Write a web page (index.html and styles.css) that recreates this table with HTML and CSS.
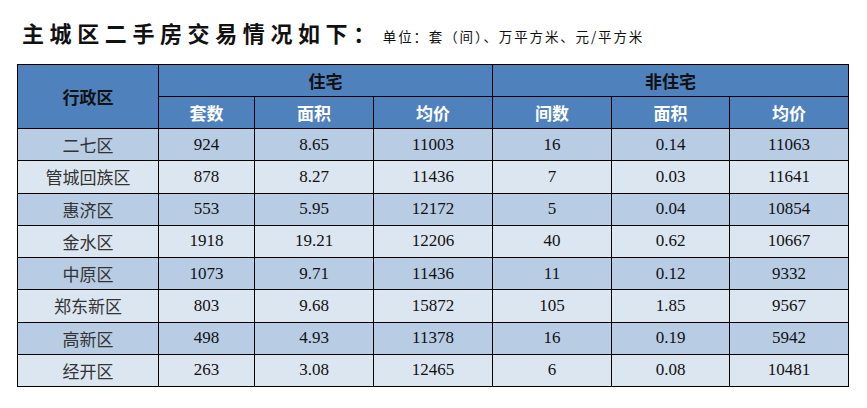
FILE: index.html
```html
<!DOCTYPE html>
<html lang="zh">
<head>
<meta charset="utf-8">
<link rel="stylesheet" href="styles.css">
</head>
<body>
<div class="page">
  <div class="title-row">
    <h1 class="title">主城区二手房交易情况如下：</h1>
    <span class="unit">单位：套（间）、万平方米、元/平方米</span>
  </div>
  <table class="grid">
    <colgroup>
      <col class="c-name"><col class="c1"><col class="c2"><col class="c3"><col class="c4"><col class="c5"><col class="c6">
    </colgroup>
    <thead>
      <tr class="h1">
        <th rowspan="2" class="dark">行政区</th>
        <th colspan="3" class="dark">住宅</th>
        <th colspan="3" class="dark">非住宅</th>
      </tr>
      <tr class="h2">
        <th>套数</th><th>面积</th><th>均价</th>
        <th>间数</th><th>面积</th><th>均价</th>
      </tr>
    </thead>
    <tbody>
      <tr class="odd"><td class="name">二七区</td><td>924</td><td>8.65</td><td>11003</td><td>16</td><td>0.14</td><td>11063</td></tr>
      <tr class="even"><td class="name">管城回族区</td><td>878</td><td>8.27</td><td>11436</td><td>7</td><td>0.03</td><td>11641</td></tr>
      <tr class="odd"><td class="name">惠济区</td><td>553</td><td>5.95</td><td>12172</td><td>5</td><td>0.04</td><td>10854</td></tr>
      <tr class="even"><td class="name">金水区</td><td>1918</td><td>19.21</td><td>12206</td><td>40</td><td>0.62</td><td>10667</td></tr>
      <tr class="odd"><td class="name">中原区</td><td>1073</td><td>9.71</td><td>11436</td><td>11</td><td>0.12</td><td>9332</td></tr>
      <tr class="even"><td class="name">郑东新区</td><td>803</td><td>9.68</td><td>15872</td><td>105</td><td>1.85</td><td>9567</td></tr>
      <tr class="odd"><td class="name">高新区</td><td>498</td><td>4.93</td><td>11378</td><td>16</td><td>0.19</td><td>5942</td></tr>
      <tr class="even"><td class="name">经开区</td><td>263</td><td>3.08</td><td>12465</td><td>6</td><td>0.08</td><td>10481</td></tr>
    </tbody>
  </table>
</div>
</body>
</html>
```
FILE: styles.css
```css
html, body {
  margin: 0;
  padding: 0;
  background: #ffffff;
}
.page {
  padding: 0 0 0 17px;
  font-family: "Noto Sans CJK SC", sans-serif;
}
.title-row {
  display: flex;
  align-items: baseline;
  height: 64px;
  box-sizing: border-box;
  padding: 19px 0 0 5px;
}
.title {
  margin: 0;
  font-size: 22px;
  line-height: 26px;
  font-weight: 700;
  letter-spacing: 5.6px;
  color: #111;
  font-family: "Noto Sans CJK SC", sans-serif;
}
.unit {
  margin-left: 2px;
  font-size: 13.5px;
  letter-spacing: 1.85px;
  color: #111;
}
.grid {
  border-collapse: collapse;
  table-layout: fixed;
  width: 831px;
  border: 1.5px solid #000;
}
.c-name { width: 141px; }
.c1 { width: 96px; }
.c2, .c3, .c4, .c6 { width: 119px; }
.c5 { width: 118px; }
.grid th, .grid td {
  border: 1px solid #000;
  padding: 0;
  text-align: center;
  vertical-align: middle;
}
.grid th {
  background: #4f81bd;
  color: #ffffff;
  font-size: 17px;
  font-weight: 700;
  height: 31px;
}
.grid th.dark {
  color: #111;
}
.grid td {
  height: 31.25px;
  font-family: "Liberation Serif", "Noto Sans CJK SC", serif;
  font-size: 17px;
  color: #111;
}
.grid td.name {
  font-family: "Noto Sans CJK SC", sans-serif;
  font-size: 17px;
  color: #333;
}
.odd td { background: #b8cce4; }
.even td { background: #dce6f1; }
```
